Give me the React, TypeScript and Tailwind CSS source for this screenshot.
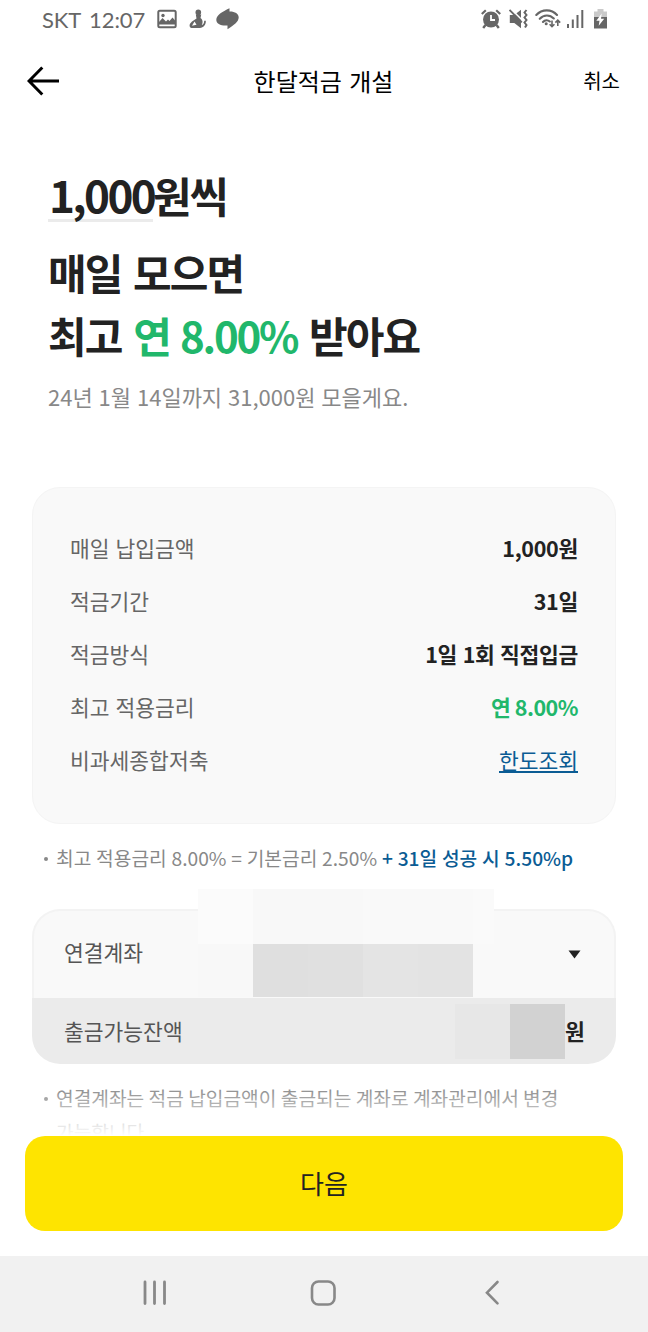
import type { ReactNode } from 'react'

type SummaryRow = {
  label: string
  value: string
  tone?: 'rate' | 'link'
}

const SUMMARY: SummaryRow[] = [
  { label: '매일 납입금액', value: '1,000원' },
  { label: '적금기간', value: '31일' },
  { label: '적금방식', value: '1일 1회 직접입금' },
  { label: '최고 적용금리', value: '연 8.00%', tone: 'rate' },
  { label: '비과세종합저축', value: '한도조회', tone: 'link' },
]

function StatusBar() {
  return (
    <div className="flex h-10 items-center justify-between pr-[40px] pl-[42px] text-[#666]">
      <div className="flex items-center">
        <span className="w-[115px] font-['Lato','Noto_Sans_CJK_KR',sans-serif] text-[22px] leading-10 tracking-[-0.1px] [word-spacing:3px] whitespace-nowrap">
          SKT 12:07
        </span>
        <svg width="20" height="20" viewBox="0 0 20 20" className="-mt-0.5" fill="none">
          <rect x="1.3" y="1.8" width="17.4" height="16.4" rx="1.5" stroke="currentColor" strokeWidth="2" />
          <circle cx="6" cy="6.5" r="1.7" fill="currentColor" />
          <path d="M2 15.500v-2.500l3.500-4 3.500 3.500 2-2 1.500 1.500 3-3.500 3 3.500v3.500z" fill="currentColor" />
        </svg>
        <svg width="18" height="20" viewBox="0 0 18 20" className="-mt-0.5 ml-3" fill="currentColor">
          <circle cx="9.300" cy="3.400" r="2.800" />
          <path d="M6.800 5.500h5.500L11.500 9c2.300 1.500 2.600 4.500 1.300 7 1.700-.5 2.400-2 2.400-4.200h1.600c.2 4.200-2 6.700-6 7.200H2.500C1 19-.2 16.500 1.200 14.500L3 12.500l4.500-3z" />
          <path d="M5.500 12.500 3 16.700l4.500-1z" fill="#fff" />
        </svg>
        <svg width="23" height="22" viewBox="0 0 23 22" className="-mt-0.5 ml-[9px]" fill="currentColor">
          <path d="M13.500.3 13.500 3.500C18.500 3.300 22.800 5.600 22.700 9.500 22.500 14 18 17 11.500 21.200V17.500C5 18 .2 16 .3 11.800.5 7 6 4 13.500.3z" />
        </svg>
      </div>

      <div className="flex items-center">
        <svg width="20" height="20" viewBox="0 0 20 20" className="-mt-0.5" fill="none" stroke="currentColor">
          <circle cx="10" cy="10.500" r="8" fill="currentColor" stroke="none" />
          <path d="M.8 5 4.800 1.200M15.200 1.200 19.200 5" strokeWidth="2.200" />
          <path d="M4.500 16 2.200 19M15.500 16l2.300 3" strokeWidth="2.400" />
          <path d="M10 6V11h4" stroke="#fff" strokeWidth="1.800" />
        </svg>
        <svg width="20" height="20" viewBox="0 0 20 20" className="-mt-0.5 ml-2" fill="none" stroke="currentColor">
          <path d="M.8 6h4.500L12 .8v18.400L5.300 14H.8z" fill="currentColor" stroke="none" />
          <path d="M1.500-.500 13 11" stroke="#fff" strokeWidth="1.700" />
          <path d="M.5 1 12.800 13.300" strokeWidth="1.900" />
          <path d="M17.500 1l-2 2.500 2 2.500-2 2.500 2 2.500-2 2.500 2 2.500-1.500 2.500" strokeWidth="2" />
        </svg>
        <svg width="26" height="20" viewBox="0 0 26 20" className="-mt-0.5 ml-[6px]" fill="none" stroke="currentColor">
          <path d="M1.300 6C7-.2 16.500-.2 22 6M4.800 9.800c4-4.400 10-4.400 14-.3M8 13c2-2.300 4.800-2.300 6.800-.5" strokeWidth="2.100" strokeLinecap="round" />
          <circle cx="11.200" cy="14.800" r="1.500" fill="currentColor" stroke="none" />
          <path d="M17 11.500V17.500M14.600 15.200l2.400 2.500 2.400-2.500M22.800 17v-5.500M20.400 13.600l2.400-2.500 2.400 2.500" strokeWidth="1.600" />
        </svg>
        <svg width="17" height="20" viewBox="0 0 17 20" className="-mt-0.5 ml-[6px]" fill="currentColor">
          <rect x="0" y="15" width="2" height="4" />
          <rect x="4.800" y="10.500" width="2" height="8.500" />
          <rect x="9.500" y="6" width="2" height="13" />
          <rect x="14.300" y="1" width="2" height="18" />
        </svg>
        <svg width="15" height="20" viewBox="0 0 15 20" className="-mt-0.5 ml-[9px]" fill="currentColor">
          <path d="M4.500 0h6v2.500H14V8H1V2.500h3.500z" opacity=".35" />
          <path d="M1 8h13v11.500H1z" />
          <path d="M8.700 4.500 3.300 11.700h3.200l-.8 5 5.500-7H8z" fill="#fff" />
        </svg>
      </div>
    </div>
  )
}

function Header() {
  return (
    <header className="grid h-[82px] grid-cols-[1fr_auto_1fr] items-center pr-[28px] pl-[27px] text-black">
      <svg width="32" height="30" viewBox="0 0 32 30" fill="none" stroke="currentColor" strokeWidth="3">
        <path d="M15.300 1.500 2 15l13.300 13.500M2 15h30" />
      </svg>
      <h1 className="text-[24px] [word-spacing:2px]">한달적금 개설</h1>
      <button className="justify-self-end text-[20px]">취소</button>
    </header>
  )
}

function SummaryValue({ row }: { row: SummaryRow }) {
  if (row.tone === 'link') {
    return (
      <a className="block border-b-2 border-[#0b5c94] leading-[23px] text-[#0b5c94]">{row.value}</a>
    )
  }
  return (
    <span
      className={
        row.tone === 'rate'
          ? 'font-bold tracking-[-0.500px] text-[#21b76b]'
          : 'font-bold tracking-[-0.300px] text-[#222] [word-spacing:1px]'
      }
    >
      {row.value}
    </span>
  )
}

function Note({ children }: { children: ReactNode }) {
  return (
    <div className="flex pl-[44px] text-[19.200px] leading-[34px] text-[#888]">
      <span className="mt-[16px] mr-[8px] size-[4px] shrink-0 rounded-full bg-[#888]" />
      <p className="whitespace-nowrap">{children}</p>
    </div>
  )
}

// Mosaic blocks covering the account name and number
function AccountMask() {
  return (
    <div className="absolute top-[-20px] left-[166px] grid grid-cols-[55px_55px_55px_55px_55px_21px] grid-rows-[55px_53px]">
      <i className="bg-[#fbfbfb]" />
      <i className="bg-[#f8f8f8]" />
      <i className="bg-[#f8f8f8]" />
      <i className="bg-[#f9f9f9]" />
      <i className="bg-[#f9f9f9]" />
      <i className="bg-[#fafafa]" />
      <i className="bg-[#f8f8f8]" />
      <i className="bg-[#dfdfdf]" />
      <i className="bg-[#e0e0e0]" />
      <i className="bg-[#e4e4e4]" />
      <i className="bg-[#e3e3e3]" />
    </div>
  )
}

function NavBar() {
  return (
    <nav className="flex h-[76px] items-center bg-[#f1f1f1] pb-[2px] pl-[142px] text-[#888]">
      <svg width="25" height="26" viewBox="0 0 25 26" stroke="currentColor" strokeWidth="2.800" strokeLinecap="round">
        <path d="M3 2v21.500M12.500 2v21.500M22.500 2v21.500" />
      </svg>
      <svg width="26" height="26" viewBox="0 0 26 26" className="ml-[143px]" fill="none" stroke="currentColor" strokeWidth="2.600">
        <rect x="2" y="1.500" width="22.500" height="23" rx="6.500" />
      </svg>
      <svg width="16" height="26" viewBox="0 0 16 26" className="ml-[148px]" fill="none" stroke="currentColor" strokeWidth="2.600" strokeLinecap="round">
        <path d="M13.500 2 3 12.700l10.500 10.600" />
      </svg>
    </nav>
  )
}

export default function App() {
  return (
    <div className="flex h-[1332px] w-[648px] flex-col overflow-hidden bg-white font-['Noto_Sans_CJK_KR',sans-serif]">
      <StatusBar />
      <Header />

      <main className="relative h-[1014px] overflow-hidden">
        <h2 className="pt-[38px] pl-[48px] text-[42px] font-bold tracking-[-1.900px] whitespace-nowrap text-[#222] [word-spacing:4px]">
          <span className="flex h-[81px]">
            <span className="h-[62px] w-[105px] border-b-3 border-[#ebebeb] pl-px text-[44px] leading-[69px] tracking-[-2.600px]">
              1,000
            </span>
            <span className="leading-[70px]">원씩</span>
          </span>
          <span className="block leading-[62px]">매일 모으면</span>
          <span className="block leading-[63px]">
            최고 <span className="tracking-[-2.200px] text-[#21b76b] [word-spacing:3px]">연 8.00%</span> 받아요
          </span>
        </h2>
        <p className="pl-[48px] text-[22px] leading-[60px] whitespace-nowrap text-[#888] [word-spacing:1px]">
          24년 1월 14일까지 31,000원 모을게요.
        </p>

        <dl className="mx-8 mt-[61px] h-[337px] rounded-[28px] border border-[#f4f4f4] bg-[#f9f9f9] px-[37px] pt-[34px]">
          {SUMMARY.map((row) => (
            <div key={row.label} className="flex h-[53px] items-center justify-between text-[21.500px]">
              <dt className="text-[#666] [word-spacing:1px]">{row.label}</dt>
              <dd>
                <SummaryValue row={row} />
              </dd>
            </div>
          ))}
        </dl>

        <div className="mt-[17px] [word-spacing:0.5px]">
          <Note>
            최고 적용금리 8.00% = 기본금리 2.50% <span className="font-medium text-[#0b5c94]">+ 31일 성공 시 5.50%p</span>
          </Note>
        </div>

        <section className="relative mx-8 mt-[34px] text-[21.500px] text-[#555]">
          <div className="flex h-[89px] items-center justify-between rounded-t-[28px] border-2 border-b-0 border-[#f3f3f3] bg-[#f9f9f9] pr-[33px] pb-[4px] pl-[30px]">
            <span>연결계좌</span>
            <svg width="13" height="9" viewBox="0 0 13 9" className="mt-1" fill="#222">
              <path d="M.5.500h12L6.500 8.500z" />
            </svg>
          </div>
          <div className="flex h-[66px] items-center rounded-b-[28px] bg-[#ebebeb] pl-[32px]">
            <span className="w-[391px]">출금가능잔액</span>
            <i className="h-[55px] w-[55px] bg-[#e7e7e7]" />
            <i className="h-[55px] w-[55px] bg-[#d2d2d2]" />
            <span className="font-bold text-[#222]">원</span>
          </div>
          <AccountMask />
        </section>

        <div className="mt-[17px]">
          <Note>
            연결계좌는 적금 납입금액이 출금되는 계좌로 계좌관리에서 변경
            <br />
            가능합니다.
          </Note>
        </div>
        <div className="absolute inset-x-0 bottom-0 h-[50px] bg-linear-to-b from-white/0 to-white" />
      </main>

      <div className="h-[120px] px-[25px]">
        <button className="h-[95px] w-full rounded-[20px] bg-[#fee400] pb-[2px] text-[26px] text-[#222]">다음</button>
      </div>
      <NavBar />
    </div>
  )
}
